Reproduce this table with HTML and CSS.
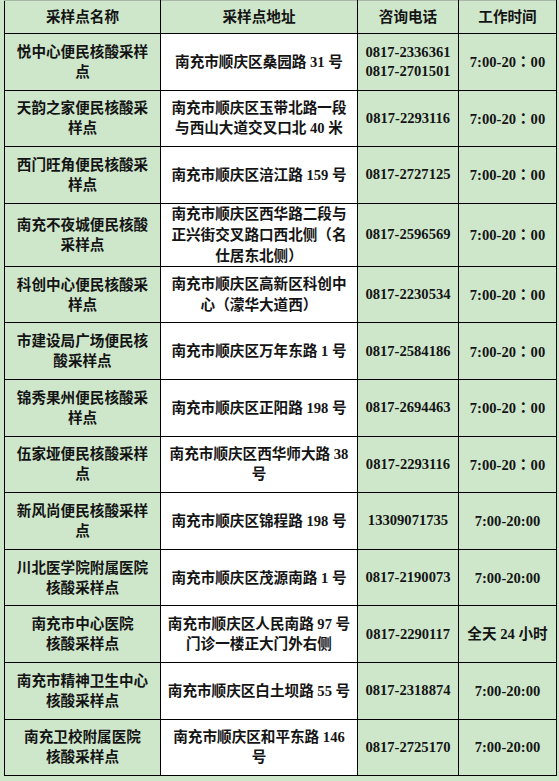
FILE: index.html
```html
<!DOCTYPE html>
<html lang="zh-CN">
<head>
<meta charset="utf-8">
<title>采样点</title>
<link rel="stylesheet" href="styles.css">
</head>
<body>
<table class="sites">
  <colgroup>
    <col class="c-name">
    <col class="c-addr">
    <col class="c-tel">
    <col class="c-time">
  </colgroup>
  <thead>
    <tr class="head">
      <th>采样点名称</th>
      <th>采样点地址</th>
      <th>咨询电话</th>
      <th>工作时间</th>
    </tr>
  </thead>
  <tbody>
    <tr>
      <td class="name">悦中心便民核酸采样<br>点</td>
      <td class="addr">南充市顺庆区桑园路 31 号</td>
      <td class="tel">0817-2336361<br>0817-2701501</td>
      <td class="time">7:00-20<span class="fw">：</span>00</td>
    </tr>
    <tr>
      <td class="name">天韵之家便民核酸采<br>样点</td>
      <td class="addr">南充市顺庆区玉带北路一段<br>与西山大道交叉口北 40 米</td>
      <td class="tel">0817-2293116</td>
      <td class="time">7:00-20<span class="fw">：</span>00</td>
    </tr>
    <tr>
      <td class="name">西门旺角便民核酸采<br>样点</td>
      <td class="addr">南充市顺庆区涪江路 159 号</td>
      <td class="tel">0817-2727125</td>
      <td class="time">7:00-20<span class="fw">：</span>00</td>
    </tr>
    <tr>
      <td class="name">南充不夜城便民核酸<br>采样点</td>
      <td class="addr">南充市顺庆区西华路二段与<br>正兴街交叉路口西北侧<span class="fw">（</span>名<br>仕居东北侧<span class="fw">）</span></td>
      <td class="tel">0817-2596569</td>
      <td class="time">7:00-20<span class="fw">：</span>00</td>
    </tr>
    <tr>
      <td class="name">科创中心便民核酸采<br>样点</td>
      <td class="addr">南充市顺庆区高新区科创中<br>心<span class="fw">（</span>濛华大道西<span class="fw">）</span></td>
      <td class="tel">0817-2230534</td>
      <td class="time">7:00-20<span class="fw">：</span>00</td>
    </tr>
    <tr>
      <td class="name">市建设局广场便民核<br>酸采样点</td>
      <td class="addr">南充市顺庆区万年东路 1 号</td>
      <td class="tel">0817-2584186</td>
      <td class="time">7:00-20<span class="fw">：</span>00</td>
    </tr>
    <tr>
      <td class="name">锦秀果州便民核酸采<br>样点</td>
      <td class="addr">南充市顺庆区正阳路 198 号</td>
      <td class="tel">0817-2694463</td>
      <td class="time">7:00-20<span class="fw">：</span>00</td>
    </tr>
    <tr>
      <td class="name">伍家垭便民核酸采样<br>点</td>
      <td class="addr">南充市顺庆区西华师大路 38<br>号</td>
      <td class="tel">0817-2293116</td>
      <td class="time">7:00-20<span class="fw">：</span>00</td>
    </tr>
    <tr>
      <td class="name">新风尚便民核酸采样<br>点</td>
      <td class="addr">南充市顺庆区锦程路 198 号</td>
      <td class="tel">13309071735</td>
      <td class="time">7:00-20:00</td>
    </tr>
    <tr>
      <td class="name">川北医学院附属医院<br>核酸采样点</td>
      <td class="addr">南充市顺庆区茂源南路 1 号</td>
      <td class="tel">0817-2190073</td>
      <td class="time">7:00-20:00</td>
    </tr>
    <tr>
      <td class="name">南充市中心医院<br>核酸采样点</td>
      <td class="addr">南充市顺庆区人民南路 97 号<br>门诊一楼正大门外右侧</td>
      <td class="tel">0817-2290117</td>
      <td class="time">全天 24 小时</td>
    </tr>
    <tr>
      <td class="name">南充市精神卫生中心<br>核酸采样点</td>
      <td class="addr">南充市顺庆区白土坝路 55 号</td>
      <td class="tel">0817-2318874</td>
      <td class="time">7:00-20:00</td>
    </tr>
    <tr>
      <td class="name">南充卫校附属医院<br>核酸采样点</td>
      <td class="addr">南充市顺庆区和平东路 146<br>号</td>
      <td class="tel">0817-2725170</td>
      <td class="time">7:00-20:00</td>
    </tr>
  </tbody>
</table>
</body>
</html>
```

FILE: styles.css
```css
html, body {
  margin: 0;
  background: #cee7cb;
}

body {
  padding: 0 0 0 4px;
  font-family: "Liberation Serif", "Noto Sans CJK SC", serif;
  font-weight: 700;
  font-size: 14.6px;
  color: #141414;
}

.sites {
  border-collapse: collapse;
  table-layout: fixed;
  width: 552px;
}

.c-name { width: 156px; }
.c-addr { width: 197px; }
.c-tel  { width: 101px; }
.c-time { width: 98px; }

.sites th,
.sites td {
  border: 1px solid #000;
  text-align: center;
  vertical-align: middle;
  padding: 0 2px;
  line-height: 20px;
  white-space: nowrap;
  background: #cee7cb;
}

.sites th {
  font-weight: 700;
  border-top-color: #a8b8a6;
}

.head { height: 33px; }

.sites tbody tr { height: 56.6px; }

.sites td.addr { background: #ffffff; }

.sites td.tel { line-height: 19px; }

.fw { font-family: "Noto Sans CJK TC", sans-serif; }
```
